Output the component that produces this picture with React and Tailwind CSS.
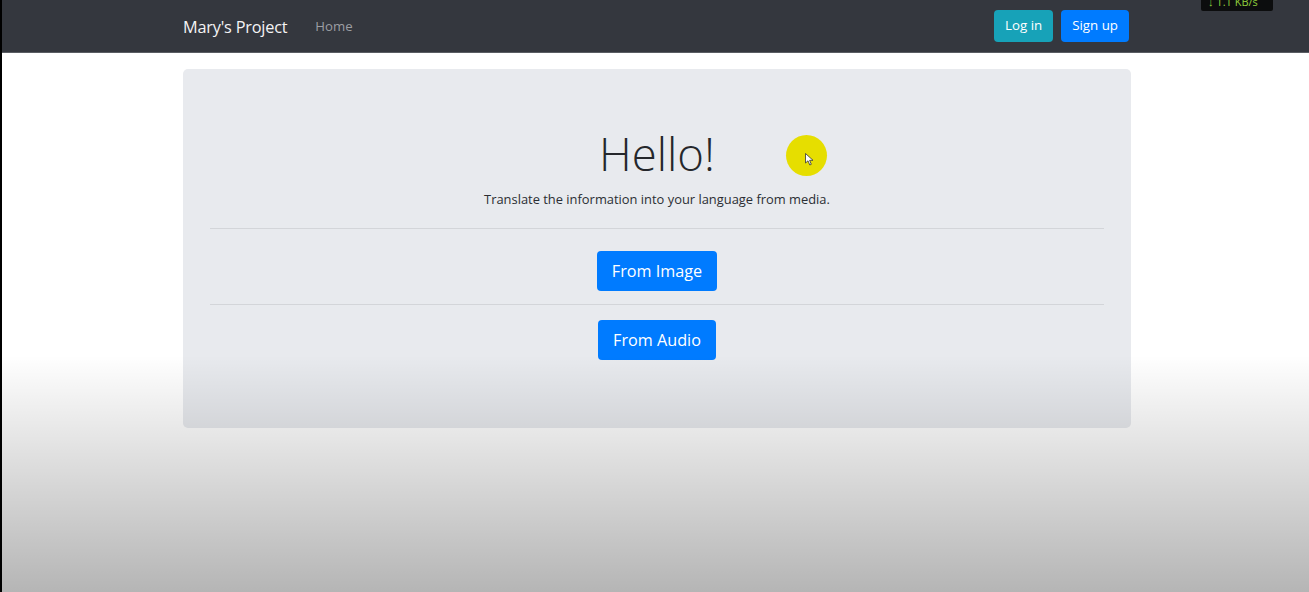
import React from "react";

const font = { fontFamily: '"Open Sans", "Noto Sans", sans-serif' };

function Navbar() {
  return (
    <nav className="h-[53px] bg-[#34373e] border-b border-[#5a5d63]">
      <div className="w-[948px] ml-[181px] h-full flex items-center">
        <a className="pt-[2px] text-[16.3px] text-[#f4f4f5] tracking-[-0.2px]">Mary's Project</a>
        <a className="pt-[2px] ml-[28px] text-[13.2px] text-[#9c9ea3]">Home</a>
        <div className="ml-auto flex items-center gap-[8px] pr-[2px]">
          <button className="h-[32px] px-[11px] rounded-[4px] bg-[#17a2b8] text-white text-[13.3px]">
            Log in
          </button>
          <button className="h-[32px] px-[11px] rounded-[4px] bg-[#007bff] text-white text-[13.3px]">
            Sign up
          </button>
        </div>
      </div>
    </nav>
  );
}

function BigButton({ children, className }) {
  return (
    <button
      className={
        "h-[40px] px-[15px] rounded-[4px] bg-[#007bff] text-white text-[16.2px] " +
        className
      }
    >
      {children}
    </button>
  );
}

function Jumbotron() {
  return (
    <div className="h-[359px] rounded-[5px] bg-[#e8eaee] px-[27px] pt-[54px] flex flex-col items-center">
      <h1 className="text-[45.5px] leading-[60px] font-light text-[#25272b]">Hello!</h1>
      <p className="mt-[6px] text-[12.9px] leading-[20px] text-[#2b2e33]">
        Translate the information into your language from media.
      </p>
      <hr className="w-full mt-[19px] border-0 h-px bg-[#d3d5d9]" />
      <BigButton className="mt-[22px]">From Image</BigButton>
      <hr className="w-full mt-[13px] border-0 h-px bg-[#d3d5d9]" />
      <BigButton className="mt-[15px]">From Audio</BigButton>
    </div>
  );
}

export default function App() {
  return (
    <div className="relative w-full h-[592px] overflow-hidden bg-white border-l-2 border-black" style={font}>
      <Navbar />
      <div className="w-[948px] ml-[181px] pt-[16px]">
        <Jumbotron />
      </div>

      {/* video shading */}
      <div className="pointer-events-none absolute left-0 right-0 top-[355px] bottom-0 bg-linear-to-b from-transparent to-[rgba(0,0,0,0.29)]" />

      {/* cursor highlight */}
      <div className="pointer-events-none absolute left-[784px] top-[135px] w-[41px] h-[41px] rounded-full bg-[#e6de00]">
        <svg className="absolute left-[19px] top-[18px]" width="9" height="13" viewBox="0 0 9 13">
          <path d="M0.5 0.5 L0.5 10 L3 7.8 L4.8 12 L6.3 11.3 L4.6 7.3 L8 7.3 Z" fill="#fff" stroke="#333" strokeWidth="0.8" />
        </svg>
      </div>

      {/* network meter overlay */}
      <div className="absolute top-0 left-[1199px] w-[72px] h-[11px] bg-[#0c0d0e] rounded-b-[2px] overflow-hidden">
        <div className="-mt-[5px] pl-[7px] text-[11px] leading-[14px] text-[#8fcf3c] whitespace-nowrap">↓ 1.1 KB/s</div>
      </div>
    </div>
  );
}
